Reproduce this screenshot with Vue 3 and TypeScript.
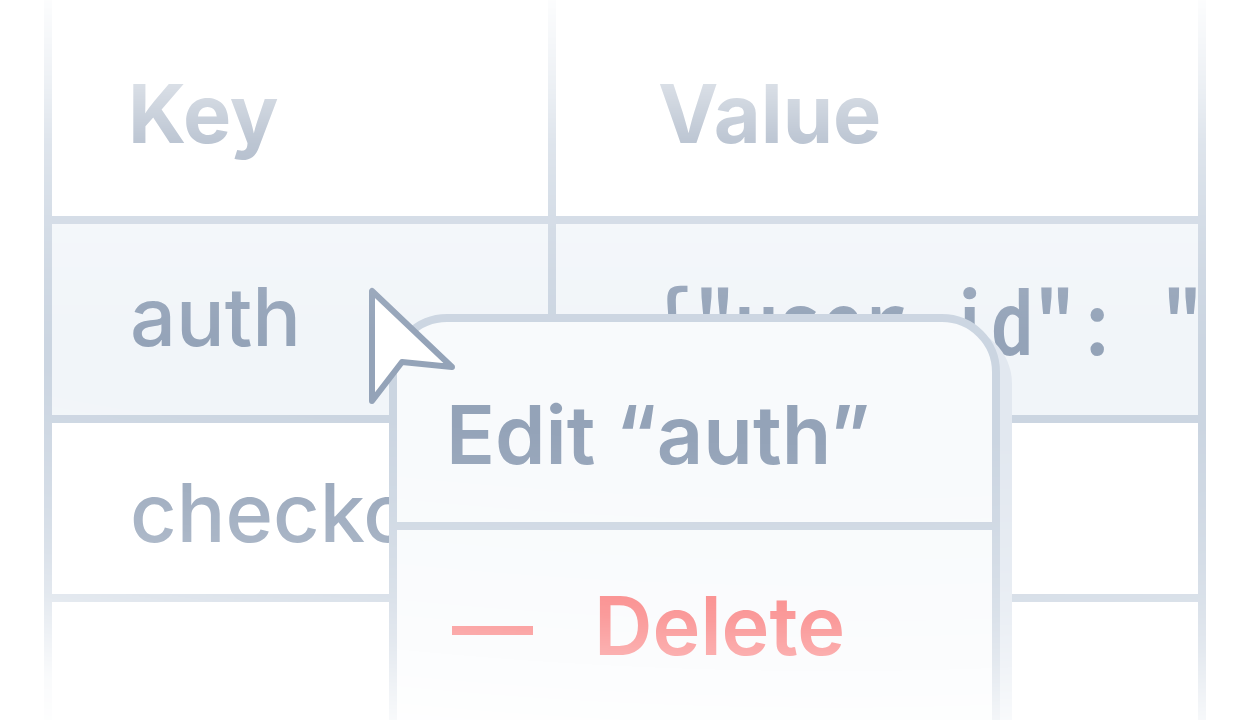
<script setup lang="ts">
interface Row {
  key: string
  value: string
  active: boolean
}

const rows: Row[] = [
  { key: 'auth', value: '{"user_id": "', active: true },
  { key: 'checkout', value: '', active: false },
  { key: '', value: '', active: false },
]
</script>

<template>
  <main class="stage">
    <table class="grid">
      <thead>
        <tr>
          <th class="key-col" scope="col">Key</th>
          <th scope="col">Value</th>
        </tr>
      </thead>
      <tbody>
        <tr v-for="(row, i) in rows" :key="i" :class="{ active: row.active }">
          <td>{{ row.key }}</td>
          <td class="value">{{ row.value }}</td>
        </tr>
      </tbody>
    </table>

    <div class="menu" role="menu">
      <button class="item edit" type="button" role="menuitem">Edit “auth”</button>
      <button class="item delete" type="button" role="menuitem">
        <span class="minus" aria-hidden="true"></span>
        <span>Delete</span>
      </button>
    </div>

    <svg class="pointer" width="96" height="124" viewBox="0 0 96 124" aria-hidden="true">
      <path d="M8 7V117L38 78L88 83Z" />
    </svg>
  </main>
</template>

<style>
html,
body {
  margin: 0;
  background: #fff;
}
</style>

<style scoped>
.stage {
  position: relative;
  box-sizing: border-box;
  height: 100vh;
  padding: 0 54px 0 44px;
  overflow: hidden;
  background: #fff;
  color: #94a3b8;
  font-family: Inter, 'Liberation Sans', sans-serif;
  font-size: 81px;
  line-height: 96px;
  -webkit-mask-image:
    linear-gradient(
      #0000000f 0,
      #00000030 40px,
      #00000059 84px,
      #000000a0 143px,
      #000000cc 216px,
      #000000ee 290px,
      #000 345px
    ),
    radial-gradient(
      circle at 66% -3685px,
      #000 4125px,
      #000000e6 4205px,
      #000000cc 4265px,
      #000000b4 4305px,
      #00000088 4350px,
      #00000050 4390px,
      #0000001c 4430px,
      #00000000 4490px
    );
  -webkit-mask-composite: source-in;
  mask-composite: intersect;
}

.grid {
  width: 100%;
  table-layout: fixed;
  border-collapse: separate;
  border-spacing: 0;
  border-left: 8px solid #cbd5e1;
}

th,
td {
  box-sizing: border-box;
  padding: 0 0 0 78px;
  border-right: 8px solid #cbd5e1;
  border-bottom: 8px solid #cbd5e1;
  overflow: hidden;
  text-align: left;
  vertical-align: top;
  white-space: nowrap;
  font-weight: 500;
}

th {
  height: 224px;
  padding-top: 66px;
  padding-left: 76px;
  font-weight: 700;
}

.key-col {
  width: 504px;
}

th + th {
  padding-left: 102px;
}

td {
  height: 179px;
  padding-top: 42px;
}

.active td {
  height: 199px;
  padding-top: 45px;
  background: #f1f5f9;
}

td.value {
  padding-left: 95px;
  font-family: 'Noto Sans Mono CJK SC', 'Liberation Mono', monospace;
  font-size: 85px;
  -webkit-text-stroke: 2px currentColor;
  white-space: pre;
}

.menu {
  position: absolute;
  top: 314px;
  left: 389px;
  box-sizing: border-box;
  width: 611px;
  border: 8px solid #cbd5e1;
  border-radius: 58px;
  background: #f8fafc;
  box-shadow: 12px 12px 0 #e2e8f0;
  overflow: hidden;
}

.item {
  display: flex;
  align-items: center;
  gap: 61px;
  box-sizing: border-box;
  width: 100%;
  margin: 0;
  border: 0;
  background: none;
  color: inherit;
  font: inherit;
  font-weight: 600;
  text-align: left;
  white-space: nowrap;
}

.edit {
  padding: 65px 49px 39px;
  border-bottom: 8px solid #cbd5e1;
}

.delete {
  padding: 48px 55px 120px;
  color: #f87171;
}

.minus {
  width: 81px;
  height: 9px;
  margin-top: 8px;
  background: currentColor;
}

.pointer {
  position: absolute;
  top: 284px;
  left: 364px;
}

.pointer path {
  fill: #fff;
  stroke: #94a3b8;
  stroke-width: 6;
  stroke-linejoin: round;
}
</style>
